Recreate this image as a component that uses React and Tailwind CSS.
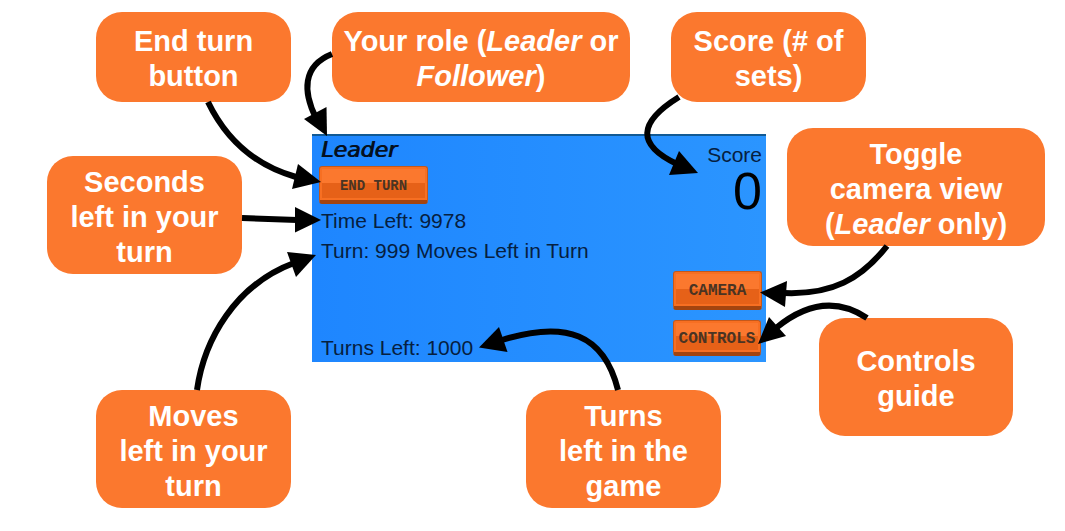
const callouts = [
  { id: "end-turn", place: "left-[96px] top-[12px] w-[195px] h-[90px]", lines: ["End turn", "button"] },
  {
    id: "role",
    place: "left-[332px] top-[12px] w-[298px] h-[90px]",
    lines: [
      <>Your role (<em>Leader</em> or</>,
      <><em>Follower</em>)</>,
    ],
  },
  { id: "score", place: "left-[671px] top-[12px] w-[195px] h-[90px]", lines: ["Score (# of", "sets)"] },
  { id: "seconds", place: "left-[47px] top-[156px] w-[195px] h-[118px]", lines: ["Seconds", "left in your", "turn"] },
  {
    id: "camera",
    place: "left-[787px] top-[128px] w-[258px] h-[118px]",
    lines: ["Toggle", "camera view", <>(<em>Leader</em> only)</>],
  },
  { id: "controls", place: "left-[819px] top-[318px] w-[194px] h-[118px]", lines: ["Controls", "guide"] },
  { id: "moves", place: "left-[96px] top-[390px] w-[195px] h-[118px]", lines: ["Moves", "left in your", "turn"] },
  { id: "turns", place: "left-[526px] top-[390px] w-[195px] h-[118px]", lines: ["Turns", "left in the", "game"] },
];

const arrows = [
  { shaft: "M208 102 Q236 160 296 177", head: "321,182 298,164 292,189" },
  { shaft: "M332 54 C302 66 303 92 316 118", head: "327,136 304,119 326.5,107" },
  { shaft: "M679 97 C637 123 637 145 677 164", head: "698,173 679,151 669,175" },
  { shaft: "M242 218 L297 220", head: "321,220 295,207 295,232.5" },
  { shaft: "M197 390 C204 340 235 285 294 263", head: "316,255 287,252 296,277" },
  { shaft: "M618 390 C604 334 566 320 502 340", head: "479,347.5 499,327 507.5,352" },
  { shaft: "M887 246 C861 279 832 295 784 293", head: "760,292.5 787,281 785,307" },
  { shaft: "M867 318 C840 300 810 300 776 328", head: "758,344 769,317 786,336" },
];

function Callout({ place, lines }) {
  return (
    <div
      className={`absolute flex flex-col items-center justify-center rounded-[26px] bg-[#fb782e] pt-1 text-center text-[29px] leading-[35px] font-bold whitespace-nowrap text-white ${place}`}
    >
      {lines.map((line, i) => (
        <span key={i}>{line}</span>
      ))}
    </div>
  );
}

function GameButton({ className, children }) {
  return (
    <button
      type="button"
      className={`flex items-center justify-center rounded-[3px] border border-b-4 border-[#c4581b] border-b-[#a3440f] bg-linear-to-b from-[#fb782e] from-50% to-[#e66118] to-50% pt-1 font-['Liberation_Mono',monospace] leading-4 font-bold text-[#4a3423] shadow-[inset_0_0_0_2px_#f76f22] ${className}`}
    >
      {children}
    </button>
  );
}

function GamePanel() {
  return (
    <section
      aria-label="Game status"
      className="absolute top-[134px] left-[312px] flex h-[228px] w-[454px] justify-between border-t-2 border-[#125a94] bg-linear-to-r from-[#1e86ff] to-[#2b95ff] text-[21px] leading-[30px] text-[#06203f]"
    >
      <div className="flex flex-col items-start pl-[7px]">
        <h1 className="pl-0.5 font-['DejaVu_Sans',sans-serif] text-[22px] leading-[28px] text-[#04101f] italic [text-shadow:1px_0_#04101f]">
          Leader
        </h1>
        <GameButton className="mt-0.5 mb-0.5 h-[38px] w-[109px] text-sm">END TURN</GameButton>
        <p className="pl-0.5">Time Left: 9978</p>
        <p className="pl-0.5">Turn: 999 Moves Left in Turn</p>
        <p className="mt-auto pl-0.5 leading-[28px]">Turns Left: 1000</p>
      </div>
      <div className="flex flex-col items-end pt-1 pr-1 pb-1.5">
        <p>Score</p>
        <p className="text-[52px] leading-[42px] text-black">0</p>
        <div className="mt-auto flex flex-col gap-2.5">
          <GameButton className="h-[39px] w-[89px] text-base">CAMERA</GameButton>
          <GameButton className="h-[36px] w-[88px] text-base">CONTROLS</GameButton>
        </div>
      </div>
    </section>
  );
}

export default function App() {
  return (
    <main className="relative min-h-screen w-full overflow-hidden bg-white font-['Liberation_Sans',Arial,sans-serif]">
      <GamePanel />
      {callouts.map((c) => (
        <Callout key={c.id} place={c.place} lines={c.lines} />
      ))}
      <svg className="pointer-events-none absolute inset-0 h-full w-full" aria-hidden="true">
        {arrows.map((a) => (
          <g key={a.shaft}>
            <path d={a.shaft} fill="none" stroke="#000" strokeWidth="6" />
            <polygon points={a.head} fill="#000" />
          </g>
        ))}
      </svg>
    </main>
  );
}
